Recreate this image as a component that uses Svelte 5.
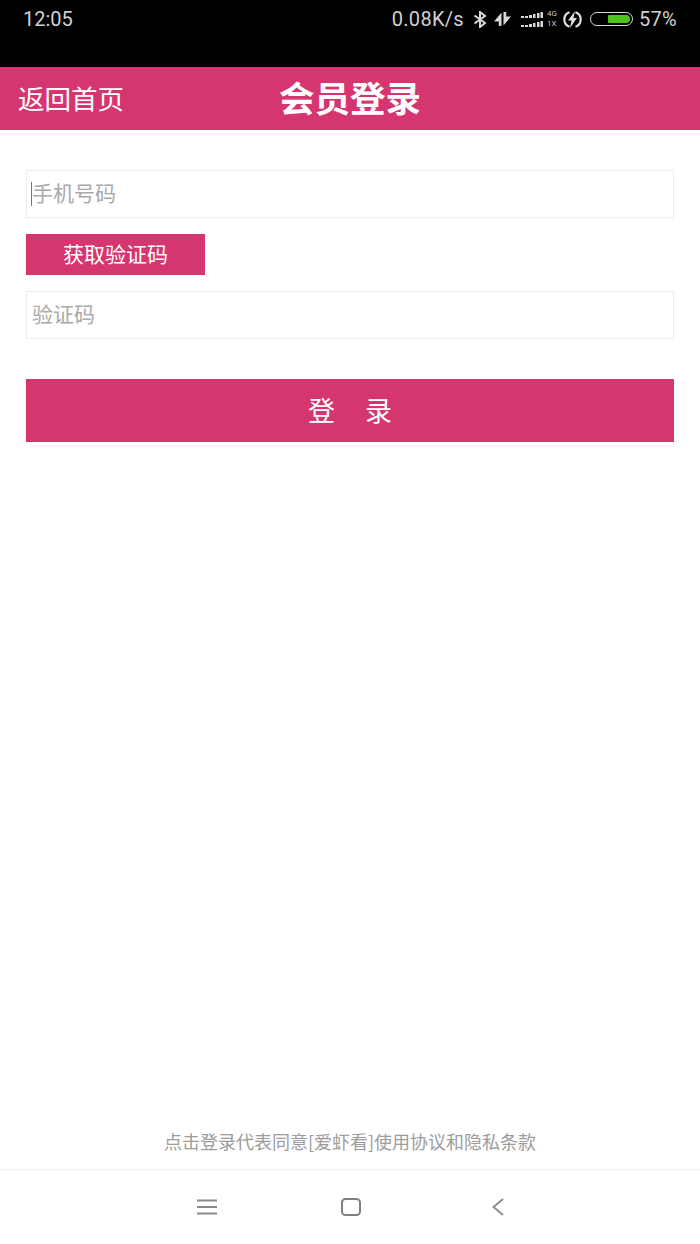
<script>
  let phone = $state("");
  let code = $state("");
</script>

<div class="page">
  <div class="status">
    <span class="time">12:05</span>
    <div class="right">
      <span class="speed">0.08K/s</span>
      <svg class="bt" width="14" height="17" viewBox="0 0 14 17" aria-hidden="true">
        <path d="M1.500 4.500 12 12l-5 4V1l5 4-10.500 7.500" fill="none" stroke="#d8d8d8" stroke-width="2" />
      </svg>
      <svg class="updown" width="17" height="16" viewBox="0 0 17 16" aria-hidden="true">
        <path d="M7.500 1.500V15H4.800V10.500H0zM9.500 14.500V1h2.700v4.500H17z" fill="#d8d8d8" />
      </svg>
      <svg class="signal" width="24" height="16" viewBox="0 0 24 16" aria-hidden="true">
        <g fill="#d8d8d8">
          <rect x="1" y="5" width="3" height="2" />
          <rect x="5" y="5" width="3" height="2" />
          <rect x="9" y="4" width="3" height="3" />
          <rect x="13" y="3" width="2.500" height="4" />
          <rect x="17" y="2" width="2.500" height="5" />
          <rect x="20.500" y="1" width="2.500" height="6" />
          <rect x="1" y="14" width="3" height="2" />
          <rect x="5" y="14" width="3" height="2" />
          <rect x="9" y="13" width="3" height="3" />
          <rect x="13" y="12" width="2.500" height="4" />
          <rect x="17" y="11" width="2.500" height="5" />
          <rect x="20.500" y="10" width="2.500" height="6" />
        </g>
      </svg>
      <span class="net"><span>4G</span><span>1X</span></span>
      <svg class="bolt" width="19" height="19" viewBox="0 0 19 19" aria-hidden="true">
        <path d="M6.500 2.300A7.600 7.600 0 0 0 6.500 16.700M12.500 2.300A7.600 7.600 0 0 1 12.500 16.700" fill="none" stroke="#e0e0e0" stroke-width="2.200" />
        <path d="M12 1 5 10.500h3.500L7 18l7-10h-3.500z" fill="#e0e0e0" />
      </svg>
      <div class="battery"><div class="level"></div></div>
      <span class="pct">57%</span>
    </div>
  </div>

  <header class="head">
    <a class="back" href="#home">返回首页</a>
    <h1>会员登录</h1>
  </header>

  <main class="form">
    <div class="field">
      <input type="text" placeholder="手机号码" bind:value={phone} />
      <span class="caret"></span>
    </div>
    <button class="send">获取验证码</button>
    <div class="field">
      <input type="text" placeholder="验证码" bind:value={code} />
    </div>
    <button class="login">登录</button>
  </main>

  <p class="terms">点击登录代表同意[爱虾看]使用协议和隐私条款</p>

  <nav class="nav">
    <svg width="20" height="16" viewBox="0 0 20 16" aria-hidden="true">
      <path d="M0 1.500h20M0 8h20M0 14.500h20" stroke="#8a8a8a" stroke-width="1.800" />
    </svg>
    <svg width="20" height="18" viewBox="0 0 20 18" aria-hidden="true">
      <rect x="1" y="1" width="18" height="16" rx="3.500" fill="none" stroke="#808080" stroke-width="2" />
    </svg>
    <svg class="backicon" width="12" height="18" viewBox="0 0 12 18" aria-hidden="true">
      <path d="M11 1 1.500 9l9.500 8" fill="none" stroke="#8a8a8a" stroke-width="1.800" />
    </svg>
  </nav>
</div>

<style>
  :global(body) {
    background: #fff;
  }
  .page {
    display: flex;
    flex-direction: column;
    height: 1244px;
    font-family: "Noto Sans CJK SC", "Noto Sans", sans-serif;
    overflow: hidden;
  }
  .status {
    display: flex;
    justify-content: space-between;
    height: 67px;
    padding: 7px 23px 0;
    box-sizing: border-box;
    background: #000;
    color: #d0d0d0;
    font-family: Roboto, sans-serif;
    font-size: 20px;
    line-height: 24px;
    flex: 0 0 auto;
  }
  .right {
    display: flex;
    align-items: center;
    height: 24px;
  }
  .speed {
    margin-right: 9px;
    letter-spacing: 0.300px;
  }
  .updown {
    margin-left: 7px;
  }
  .signal {
    margin-left: 9px;
  }
  .net {
    display: flex;
    flex-direction: column;
    width: 11px;
    margin-left: 3px;
    font-size: 8px;
    line-height: 10px;
    color: #c8c8c8;
  }
  .bolt {
    margin-left: 5px;
  }
  .battery {
    display: flex;
    justify-content: flex-end;
    width: 43px;
    height: 14px;
    margin-left: 8px;
    padding: 2px 2px;
    box-sizing: border-box;
    border: 1px solid #d8d8d8;
    border-radius: 7px;
  }
  .level {
    width: 22px;
    background: #4cc41a;
    border-radius: 1px 4px 4px 1px;
  }
  .pct {
    margin-left: 6px;
    letter-spacing: 0.300px;
  }
  .head {
    display: flex;
    align-items: center;
    justify-content: center;
    position: relative;
    height: 63px;
    background: #d6366f;
    color: #fff;
    flex: 0 0 auto;
  }
  .back {
    position: absolute;
    left: 18px;
    top: 12px;
    color: #fff;
    font-size: 26.500px;
    line-height: 38px;
    text-decoration: none;
  }
  h1 {
    margin: 0;
    padding-bottom: 3px;
    font-size: 35.500px;
    line-height: 60px;
    font-weight: 700;
  }
  .form {
    display: flex;
    flex-direction: column;
    align-items: flex-start;
    padding: 40px 26px 0;
    flex: 0 0 auto;
  }
  .field {
    position: relative;
    width: 100%;
  }
  input {
    display: block;
    width: 100%;
    height: 48px;
    padding: 0 5px 4px;
    box-sizing: border-box;
    border: 1px solid #ececec;
    border-radius: 0;
    outline: none;
    background: #fff;
    color: #333;
    font: inherit;
    font-size: 21px;
  }
  input::placeholder {
    color: #a9a9a9;
    opacity: 1;
  }
  .caret {
    position: absolute;
    left: 5px;
    top: 12px;
    width: 1px;
    height: 24px;
    background: #777;
  }
  button {
    border: none;
    border-radius: 0;
    background: #d6366f;
    color: #fff;
    font: inherit;
    padding: 0 0 3px;
  }
  .send {
    width: 179px;
    height: 41px;
    margin: 16px 0;
    font-size: 21px;
  }
  .login {
    width: 100%;
    height: 63px;
    margin-top: 40px;
    font-size: 27px;
    letter-spacing: 30px;
    text-indent: 30px;
  }
  .terms {
    margin: auto 0 0;
    height: 43px;
    padding-top: 2px;
    box-sizing: border-box;
    color: #9c9c9c;
    font-size: 18px;
    line-height: 26px;
    text-align: center;
    flex: 0 0 auto;
  }
  .nav {
    display: flex;
    align-items: center;
    justify-content: center;
    gap: 124px;
    height: 75px;
    border-top: 1px solid #efefef;
    box-sizing: border-box;
    flex: 0 0 auto;
  }
  .backicon {
    margin-left: 7px;
  }
</style>
